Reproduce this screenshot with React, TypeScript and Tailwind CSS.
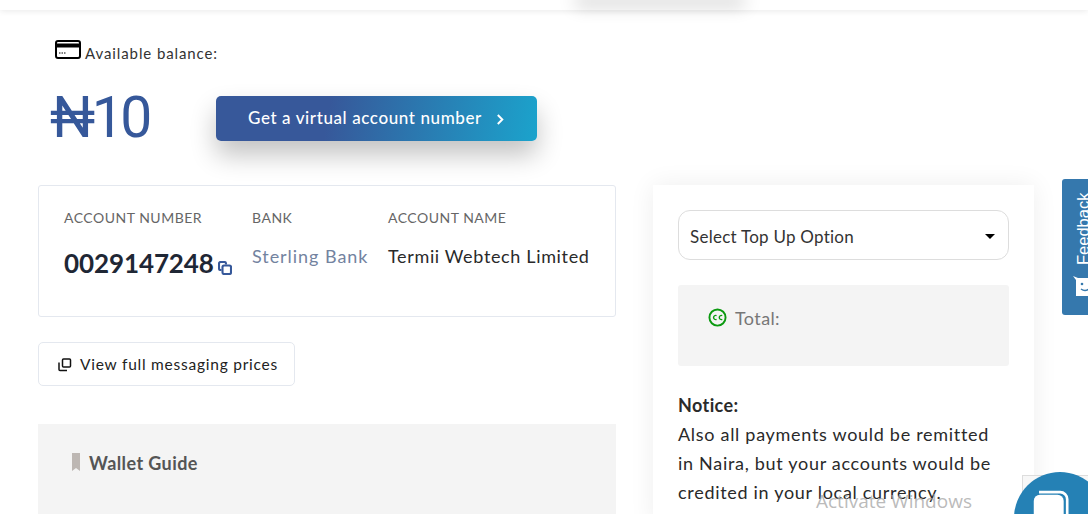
const karla = "font-['Lato','Noto_Sans',sans-serif]";

function CardIcon() {
  return (
    <svg viewBox="0 0 26 19" className="w-[26px] h-[19px] shrink-0 mb-[3px]" fill="none">
      <rect x="1" y="1" width="24" height="17" rx="2" stroke="#000" strokeWidth="2" />
      <rect x="1" y="3.500" width="24" height="4" fill="#000" />
      <path d="M4 13h1.500M6.500 13h1.500M9 13h1.500" stroke="#000" strokeWidth="1" />
    </svg>
  );
}

function CopyIcon() {
  return (
    <svg viewBox="0 0 14 14" className="w-[14px] h-[14px] shrink-0" fill="none" stroke="#36589a" strokeWidth="2.100">
      <path d="M3.500 9H2.500A1.500 1.500 0 0 1 1 7.500v-5A1.500 1.500 0 0 1 2.500 1h4A1.500 1.500 0 0 1 8 2.500V3.500" />
      <rect x="4.500" y="4.500" width="8.500" height="8.500" rx="1.500" />
    </svg>
  );
}

function PricesIcon() {
  return (
    <svg viewBox="0 0 14 14" className="w-[14px] h-[14px] shrink-0" fill="none" stroke="#111" strokeWidth="1.500">
      <rect x="4.500" y="1" width="8" height="8" rx="1" />
      <path d="M1 4.500v7a1 1 0 0 0 1 1h7" />
    </svg>
  );
}

function Label({ children }: { children: React.ReactNode }) {
  return <div className="text-[14px] leading-[18px] tracking-[0.5px] text-[#666]">{children}</div>;
}

export default function App() {
  return (
    <div className={`relative w-[1088px] h-[514px] overflow-hidden bg-white ${karla}`}>
      <div className="h-[10px] bg-white shadow-[0_1px_6px_rgba(0,0,0,0.09)]" />
      <div className="absolute top-[-10px] left-[575px] w-[170px] h-[10px] shadow-[0_6px_18px_rgba(0,0,0,0.2)]" />

      <div className="pl-[38px]">
        <div className="flex items-end gap-[4px] pl-[17px] pt-[30px] h-[52px]">
          <CardIcon />
          <span className="mb-[1px] text-[15px] leading-[16px] tracking-[0.9px] text-[#333]">Available balance:</span>
        </div>

        <div className="flex items-start mt-[22px] h-[101px]">
          <div className="w-[178px] pl-[12px] pt-[4px] text-[57px] leading-[60px] text-[#36589a] font-['Roboto',sans-serif] font-normal tracking-[-3.500px]">
            ₦10
          </div>
          <button className="mt-[12px] flex items-center w-[321px] h-[45px] pl-[32px] pb-[2px] rounded-[5px] text-white text-[17px] font-medium tracking-[0.6px] bg-[linear-gradient(100deg,#37589a_35%,#1ba3cc_100%)] shadow-[0_14px_26px_rgba(0,0,0,0.24)]">
            Get a virtual account number
            <svg viewBox="0 0 10 14" className="w-[9px] h-[13px] ml-[14px] mt-[3px]" fill="none" stroke="#fff" strokeWidth="2.200">
              <path d="M2 2l5 5-5 5" />
            </svg>
          </button>
        </div>

        <div className="flex items-start">
          <div className="w-[578px]">
            <div className="h-[132px] border border-[#e4e8ef] rounded-[3px] pl-[25px] pt-[23px] flex">
              <div className="w-[188px]">
                <Label>ACCOUNT NUMBER</Label>
                <div className="flex items-end mt-[19px]">
                  <span className="text-[26px] leading-[34px] font-bold tracking-[-0.1px] text-[#1f2735]">0029147248</span>
                  <span className="ml-[4px] mb-[5px]"><CopyIcon /></span>
                </div>
              </div>
              <div className="w-[136px]">
                <Label>BANK</Label>
                <div className="mt-[17px] text-[18px] leading-[24px] tracking-[0.95px] text-[#73839f]">Sterling Bank</div>
              </div>
              <div>
                <Label>ACCOUNT NAME</Label>
                <div className="mt-[17px] text-[18px] leading-[24px] tracking-[0.65px] text-[#2a2a2a]">Termii Webtech Limited</div>
              </div>
            </div>

            <button className="mt-[25px] flex items-center gap-[8px] w-[257px] h-[44px] pl-[19px] pt-[2px] border border-[#e4e8ef] rounded-[5px] bg-white text-[15.500px] tracking-[0.76px] text-[#222]">
              <PricesIcon />
              View full messaging prices
            </button>

            <div className="mt-[38px] h-[120px] bg-[#f4f4f4] pl-[34px] pt-[28px] flex items-start gap-[9px]">
              <svg viewBox="0 0 8 18" className="w-[8px] h-[18px] mt-[1px]">
                <path d="M0 0h8v18L4 15 0 18z" fill="#bdb7b3" />
              </svg>
              <span className="text-[18px] leading-[22px] font-bold tracking-[0.4px] text-[#555]">Wallet Guide</span>
            </div>
          </div>

          <div className="ml-[37px] w-[381px] h-[340px] bg-white px-[25px] pt-[25px] shadow-[0_0_24px_rgba(0,0,0,0.07)]">
            <div className="h-[50px] border border-[#ddd] rounded-[12px] flex items-center justify-between pl-[11px] pr-[13px] pt-[3px] text-[17px] tracking-[0.25px] text-[#333]">
              Select Top Up Option
              <span className="w-0 h-0 border-x-[5px] border-x-transparent border-t-[5px] border-t-black" />
            </div>
            <div className="mt-[25px] h-[81px] bg-[#f4f4f4] rounded-[3px] pl-[30px] pt-[22px] flex items-start gap-[8px]">
              <svg viewBox="0 0 20 20" className="w-[19px] h-[19px] mt-[1px]" fill="none">
                <circle cx="10" cy="10" r="8.500" stroke="#0b9a10" strokeWidth="2" />
                <path d="M9 8a2.200 2.200 0 1 0 0 4M15 8a2.200 2.200 0 1 0 0 4" stroke="#0b9a10" strokeWidth="1.500" />
              </svg>
              <span className="text-[18px] leading-[22px] tracking-[0.4px] text-[#777]">Total:</span>
            </div>
            <div className="mt-[25px] text-[18px] leading-[29px] tracking-[0.7px] text-[#2a2a2a]">
              <div className="font-bold tracking-[0.4px]">Notice:</div>
              Also all payments would be remitted
              <br />
              in Naira, but your accounts would be
              <br />
              credited in your local currency.
            </div>
          </div>
        </div>
      </div>

      <div className="absolute left-[1062px] top-[179px] w-[40px] h-[136px] rounded-l-[3px] bg-[#3578ad] overflow-hidden">
        <span className="absolute left-[13px] top-[14px] h-[72px] text-white text-[16.500px] leading-[17px] font-['Liberation_Sans',sans-serif] [writing-mode:vertical-rl] rotate-180">
          Feedback
        </span>
        <svg viewBox="0 0 24 20" className="absolute left-[11px] top-[97px] w-[24px] h-[20px]">
          <path d="M0 0l5 2h19v18H3V4z" fill="#fff" />
          <circle cx="9" cy="8" r="1.300" fill="#3578ad" />
          <path d="M8 13q4 3 8 0" stroke="#3578ad" strokeWidth="1.500" fill="none" />
        </svg>
      </div>

      <div className="absolute left-[1022px] top-[475px] w-[70px] h-[60px] border border-[#ddd] bg-[#f7f7f7]" />
      <div className="absolute left-[1014px] top-[472px] w-[92px] h-[92px] rounded-full bg-[#2581b5]">
        <svg viewBox="0 0 50 40" className="absolute left-[18px] top-[18px] w-[44px] h-[36px]" fill="none" stroke="#fff" strokeWidth="3">
          <rect x="2" y="5" width="34" height="34" rx="7" fill="#fff" stroke="none" />
          <path d="M8 2h24a8 8 0 0 1 8 8v24" />
        </svg>
      </div>

      <div className="absolute left-[816px] top-[489px] text-[19px] leading-[24px] text-[#a9a9a9]/80 font-['Open_Sans',sans-serif]">
        Activate Windows
      </div>
    </div>
  );
}
